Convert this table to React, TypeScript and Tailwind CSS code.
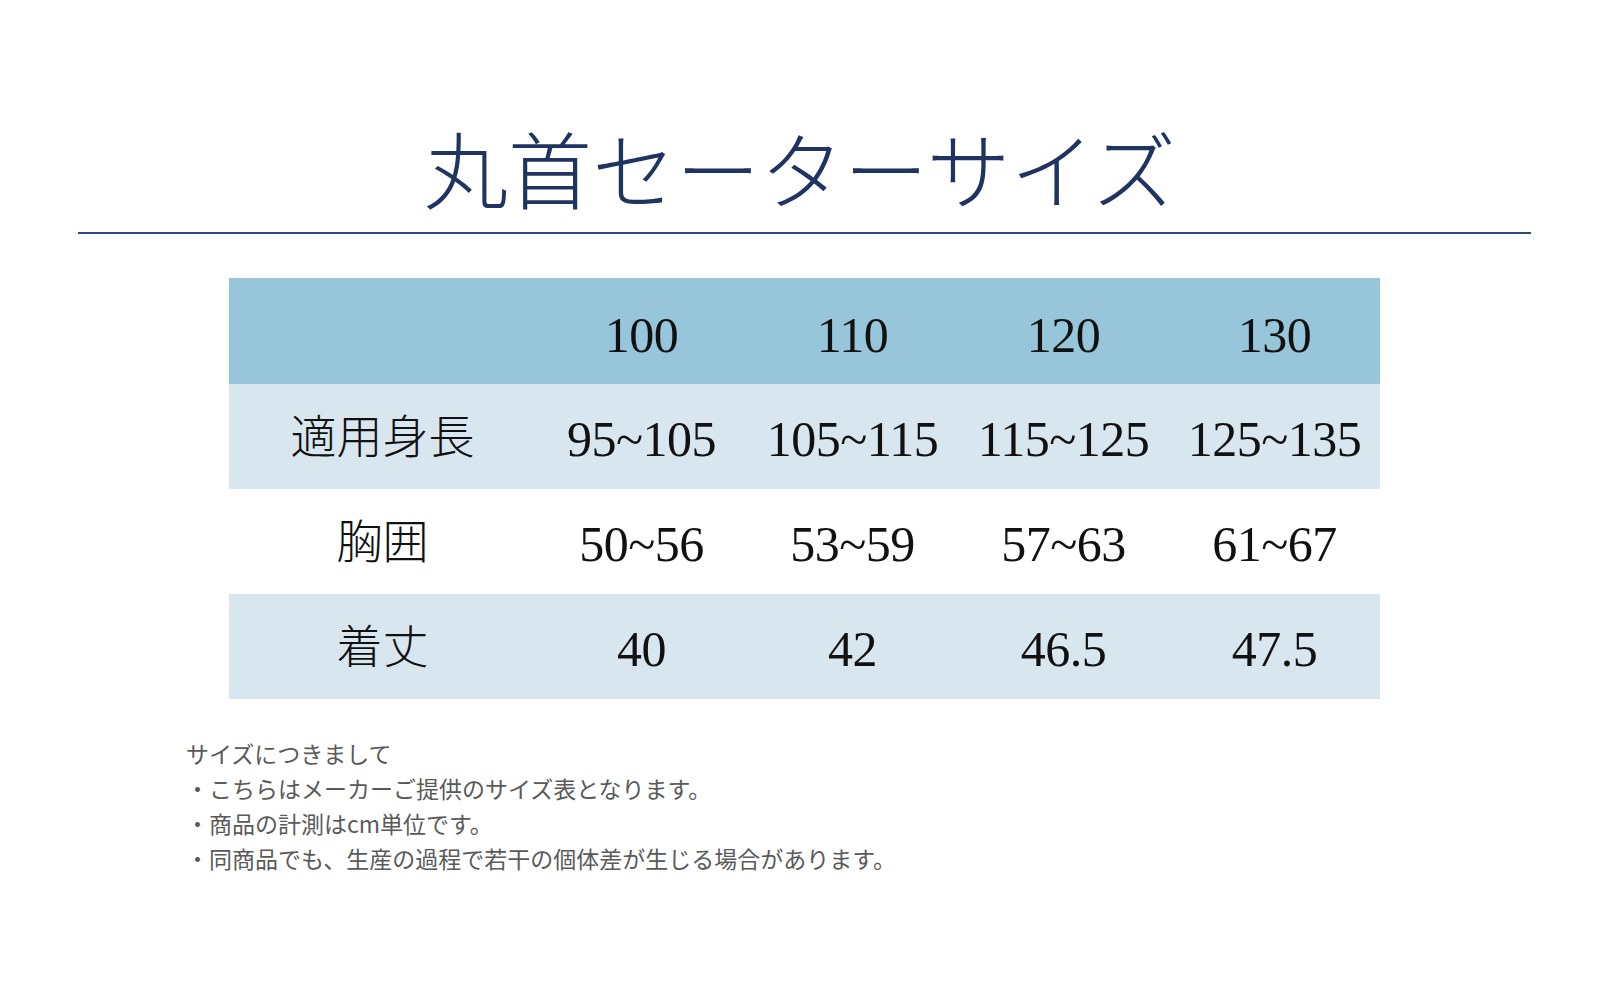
import React from 'react';

const SERIF = { fontFamily: '"Liberation Serif", "Noto Sans CJK JP", serif' };

const sizes = ['100', '110', '120', '130'];

const rows = [
  { label: '適用身長', values: ['95~105', '105~115', '115~125', '125~135'], shaded: true },
  { label: '胸囲', values: ['50~56', '53~59', '57~63', '61~67'], shaded: false },
  { label: '着丈', values: ['40', '42', '46.5', '47.5'], shaded: true },
];

const notes = [
  'サイズにつきまして',
  '・こちらはメーカーご提供のサイズ表となります。',
  '・商品の計測はcm単位です。',
  '・同商品でも、生産の過程で若干の個体差が生じる場合があります。',
];

export default function App() {
  return (
    <div className="w-[1600px] min-h-[1000px] bg-white">
      {/* Title */}
      <div className="pt-[125px] flex justify-center">
        <h1
          className="text-[84px] leading-none font-light text-[#1f3461]"
          style={{ fontFamily: '"Noto Sans CJK JP", sans-serif' }}
        >
          丸首セーターサイズ
        </h1>
      </div>
      <div className="mt-[23px] ml-[78px] w-[1453px] h-[2px] bg-[#2c4a7c]" />

      {/* Size table */}
      <div className="mt-[44px] ml-[229px] w-[1151px]" style={SERIF}>
        <div className="grid grid-cols-[307px_repeat(4,211px)] h-[106px] bg-[#97c5da] items-center">
          <div />
          {sizes.map((s) => (
            <div key={s} className="text-center text-[50px] tracking-[-0.5px] text-[#111] pt-[8px]">
              {s}
            </div>
          ))}
        </div>
        {rows.map((row) => (
          <div
            key={row.label}
            className={`grid grid-cols-[307px_repeat(4,211px)] h-[105px] items-center ${
              row.shaded ? 'bg-[#d8e7ef]' : 'bg-white'
            }`}
          >
            <div className="text-center text-[46px] font-light text-[#111] leading-none pt-[2px]">
              {row.label}
            </div>
            {row.values.map((v, i) => (
              <div key={i} className="text-center text-[50px] tracking-[-0.5px] text-[#111] leading-none pt-[4px]">
                {v}
              </div>
            ))}
          </div>
        ))}
      </div>

      {/* Notes */}
      <div
        className="mt-[37px] ml-[186px] text-[23px] leading-[35px] text-[#5a5a5a]"
        style={{ fontFamily: '"Noto Sans CJK JP", sans-serif' }}
      >
        {notes.map((n) => (
          <p key={n}>{n}</p>
        ))}
      </div>
    </div>
  );
}
